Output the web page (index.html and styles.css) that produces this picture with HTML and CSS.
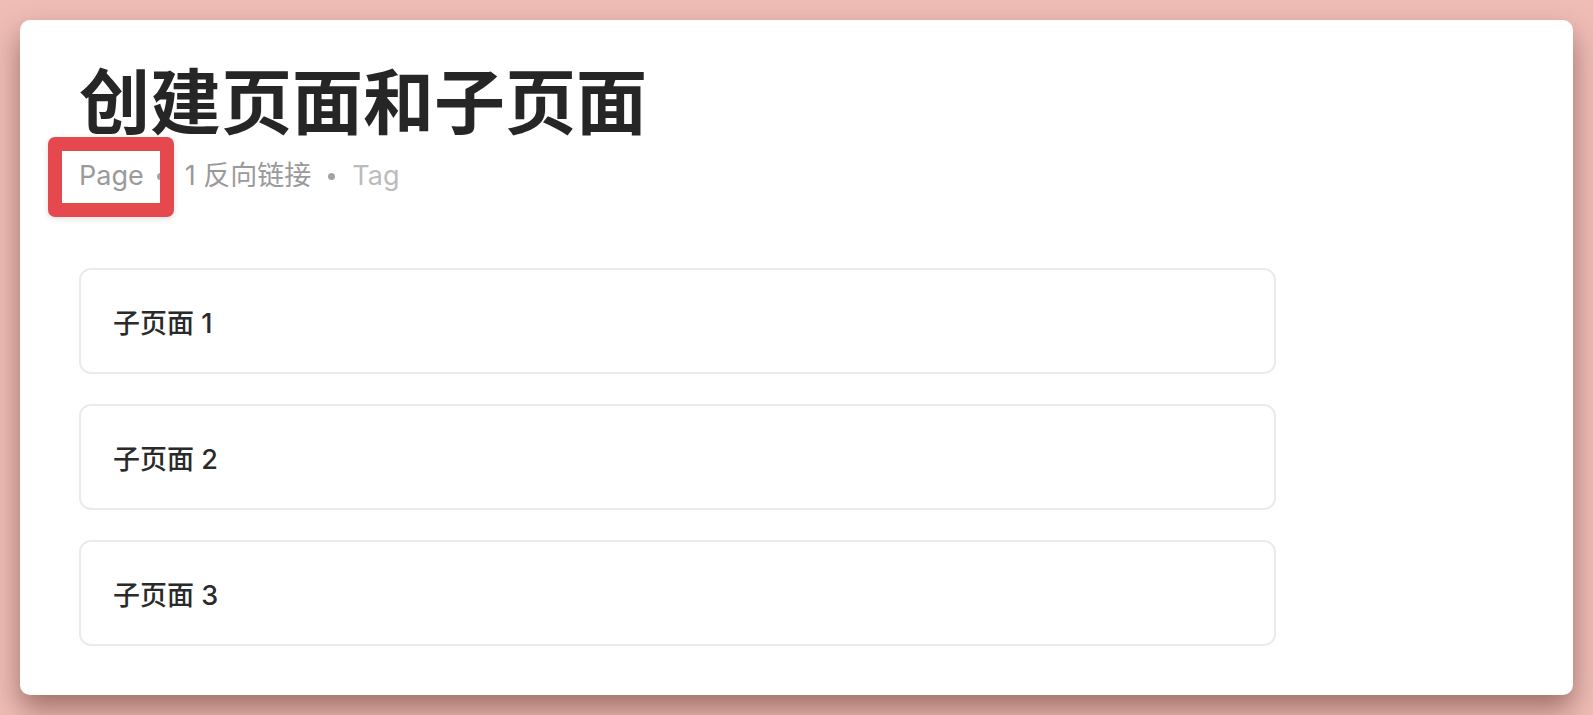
FILE: index.html
```html
<!DOCTYPE html>
<html lang="zh">
<head>
<meta charset="utf-8">
<title>创建页面和子页面</title>
<link rel="stylesheet" href="styles.css">
</head>
<body>
  <main class="sheet">
    <h1 class="title">创建页面和子页面</h1>
    <div class="meta">
      <span class="meta-item">Page</span>
      <span class="dot dot-first"></span>
      <span class="meta-item">1 反向链接</span>
      <span class="dot"></span>
      <span class="meta-item tag">Tag</span>
    </div>
    <div class="highlight"></div>
    <ul class="children">
      <li class="child">子页面 1</li>
      <li class="child">子页面 2</li>
      <li class="child">子页面 3</li>
    </ul>
  </main>
</body>
</html>
```

FILE: styles.css
```css
* { box-sizing: border-box; }
html, body { height: 100%; }
body {
  margin: 0;
  padding: 20px 20px 20px 20px;
  background: #efbdb6;
  font-family: "Inter", "Noto Sans CJK SC", sans-serif;
  color: #2a2a2a;
}
.sheet {
  position: relative;
  height: 675px;
  background: #ffffff;
  border-radius: 10px;
  padding: 40px 59px 0 59px;
  box-shadow: 0 14px 28px rgba(80, 35, 25, 0.5);
}
.title {
  margin: 0;
  font-size: 71px;
  font-weight: 700;
  line-height: 84px;
  color: #262626;
  letter-spacing: 0;
}
.meta {
  display: flex;
  align-items: center;
  gap: 17px;
  margin-top: 12px;
  height: 40px;
  font-size: 27px;
  color: #9a9a9a;
}
.meta-item { line-height: 40px; }
.tag { color: #bcbcbc; }
.dot {
  width: 7px;
  height: 7px;
  border-radius: 50%;
  background: #a3a3a3;
}
.dot-first {
  margin-left: -4px;
  margin-right: 4px;
}
.highlight {
  position: absolute;
  left: 28px;
  top: 117px;
  width: 126px;
  height: 80px;
  border: 14px solid #e5484d;
  border-radius: 7px;
  box-shadow: 0 2px 6px rgba(0,0,0,0.12);
}
.children {
  list-style: none;
  margin: 72px 0 0 0;
  padding: 0;
  width: 1197px;
  display: flex;
  flex-direction: column;
  gap: 30px;
}
.child {
  height: 106px;
  display: flex;
  align-items: center;
  padding-left: 32px;
  border: 2px solid #ebebeb;
  border-radius: 12px;
  font-size: 27px;
  font-weight: 500;
  color: #2a2a2a;
}
```
